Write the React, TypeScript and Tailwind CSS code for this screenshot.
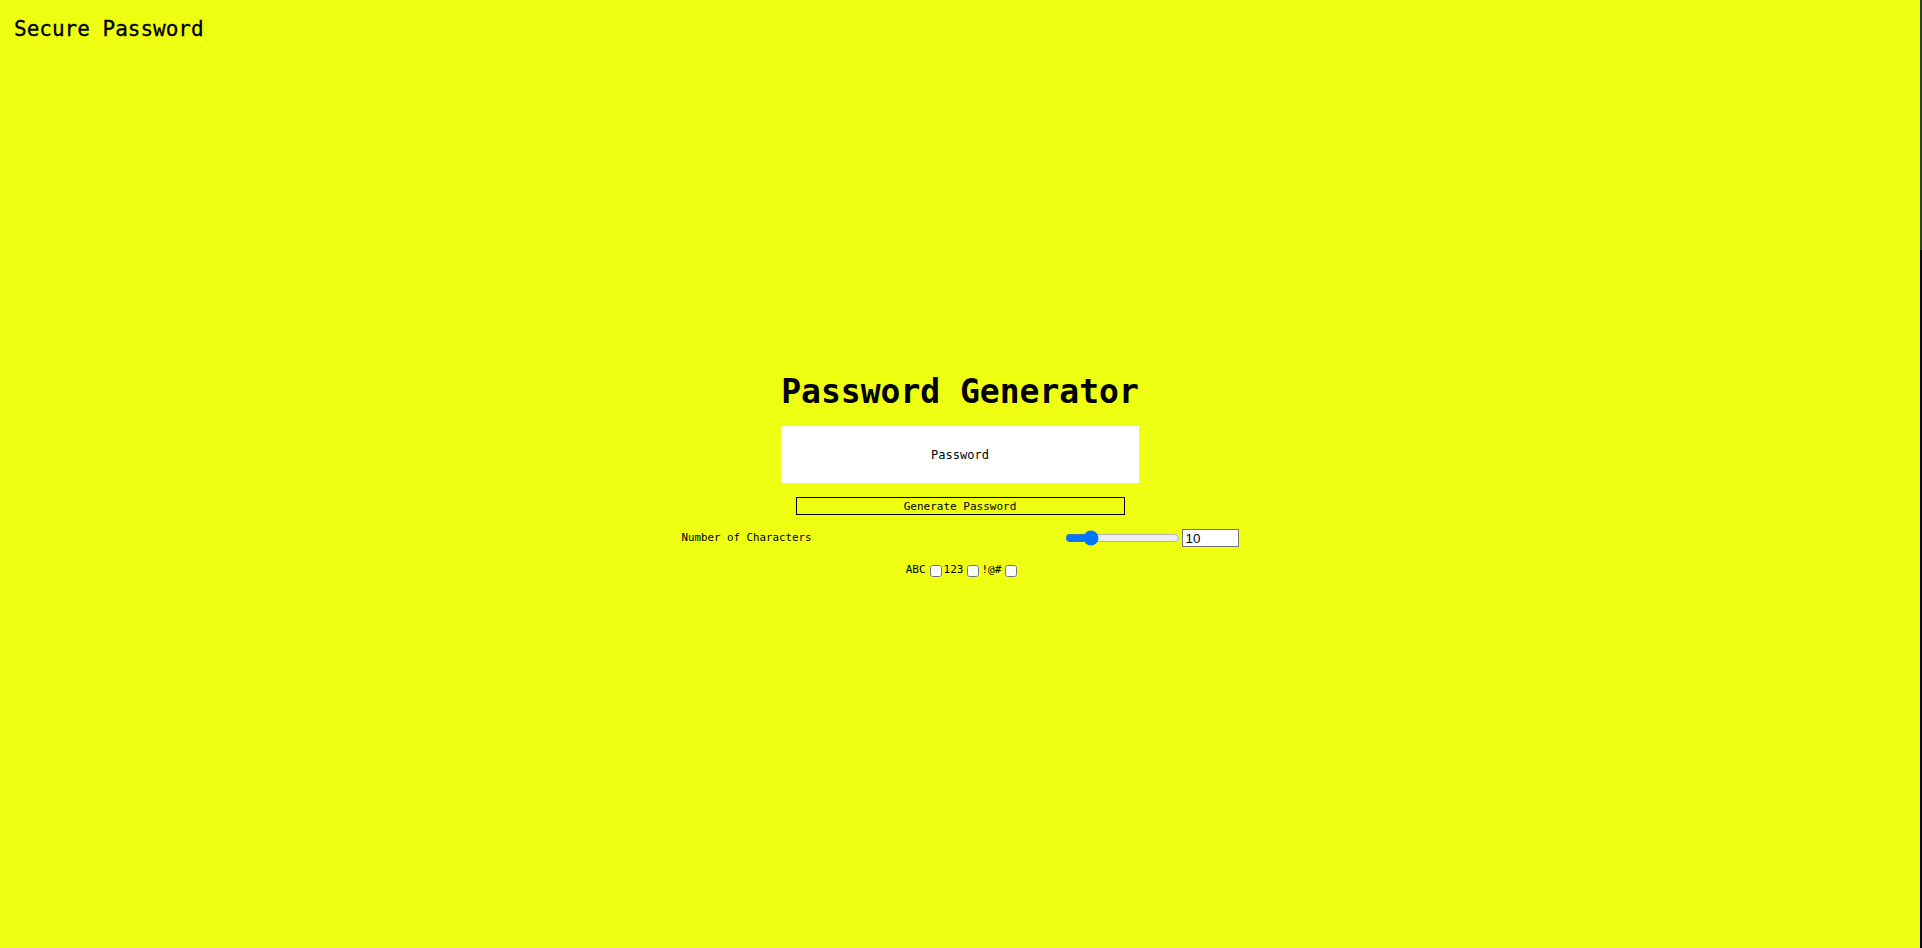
import React, { useState } from "react";

export default function App() {
  const [len, setLen] = useState(10);
  return (
    <div className="flex min-h-screen w-full bg-[#eeff11] font-['DejaVu_Sans_Mono',monospace] text-black">
      <div className="flex flex-1 flex-col">
        <header className="pl-[14px] pt-[16px]">
          <h2 className="text-[21px] leading-[26px] font-normal [-webkit-text-stroke:0.3px_black]">Secure Password</h2>
        </header>
        <main className="flex flex-col items-center gap-[14px] pt-[330px]">
          <h1 className="text-[33px] leading-[40px] font-bold">Password Generator</h1>
          <div className="flex h-[57px] w-[358px] items-center justify-center bg-white text-[12px]">
            Password
          </div>
          <button className="flex h-[18px] w-[329px] items-center justify-center border border-black text-[11px] leading-none">
            Generate Password
          </button>
          <div className="flex h-[18px] w-[557px] items-center justify-between text-[11px]">
            <span className="text-[10.8px]">Number of Characters</span>
            <div className="flex items-center">
              <input
                type="range"
                min={1}
                max={50}
                value={len}
                onChange={(e) => setLen(Number(e.target.value))}
                className="mx-[2px] w-[115px]"
              />
              <input
                type="number"
                value={len}
                onChange={(e) => setLen(Number(e.target.value))}
                className="box-border h-[18px] w-[57px] border border-[#767676] bg-white px-[3px] font-['Liberation_Sans',Arial,sans-serif] text-[13.33px] leading-none"
              />
            </div>
          </div>
          <div className="flex h-[19px] items-center pl-[5px] text-[11px]">
            <span>ABC</span>
            <input type="checkbox" className="mb-[3px] ml-[4px] mr-[2px] mt-[3px] h-[12px] w-[12px]" />
            <span>123</span>
            <input type="checkbox" className="mb-[3px] ml-[4px] mr-[2px] mt-[3px] h-[12px] w-[12px]" />
            <span>!@#</span>
            <input type="checkbox" className="mb-[3px] ml-[4px] mr-[2px] mt-[3px] h-[12px] w-[12px]" />
          </div>
        </main>
      </div>
      <div className="flex w-[2px] flex-col">
        <div className="h-[250px] bg-[#2a3a30]" />
        <div className="flex-1 bg-[#050505]" />
      </div>
    </div>
  );
}
